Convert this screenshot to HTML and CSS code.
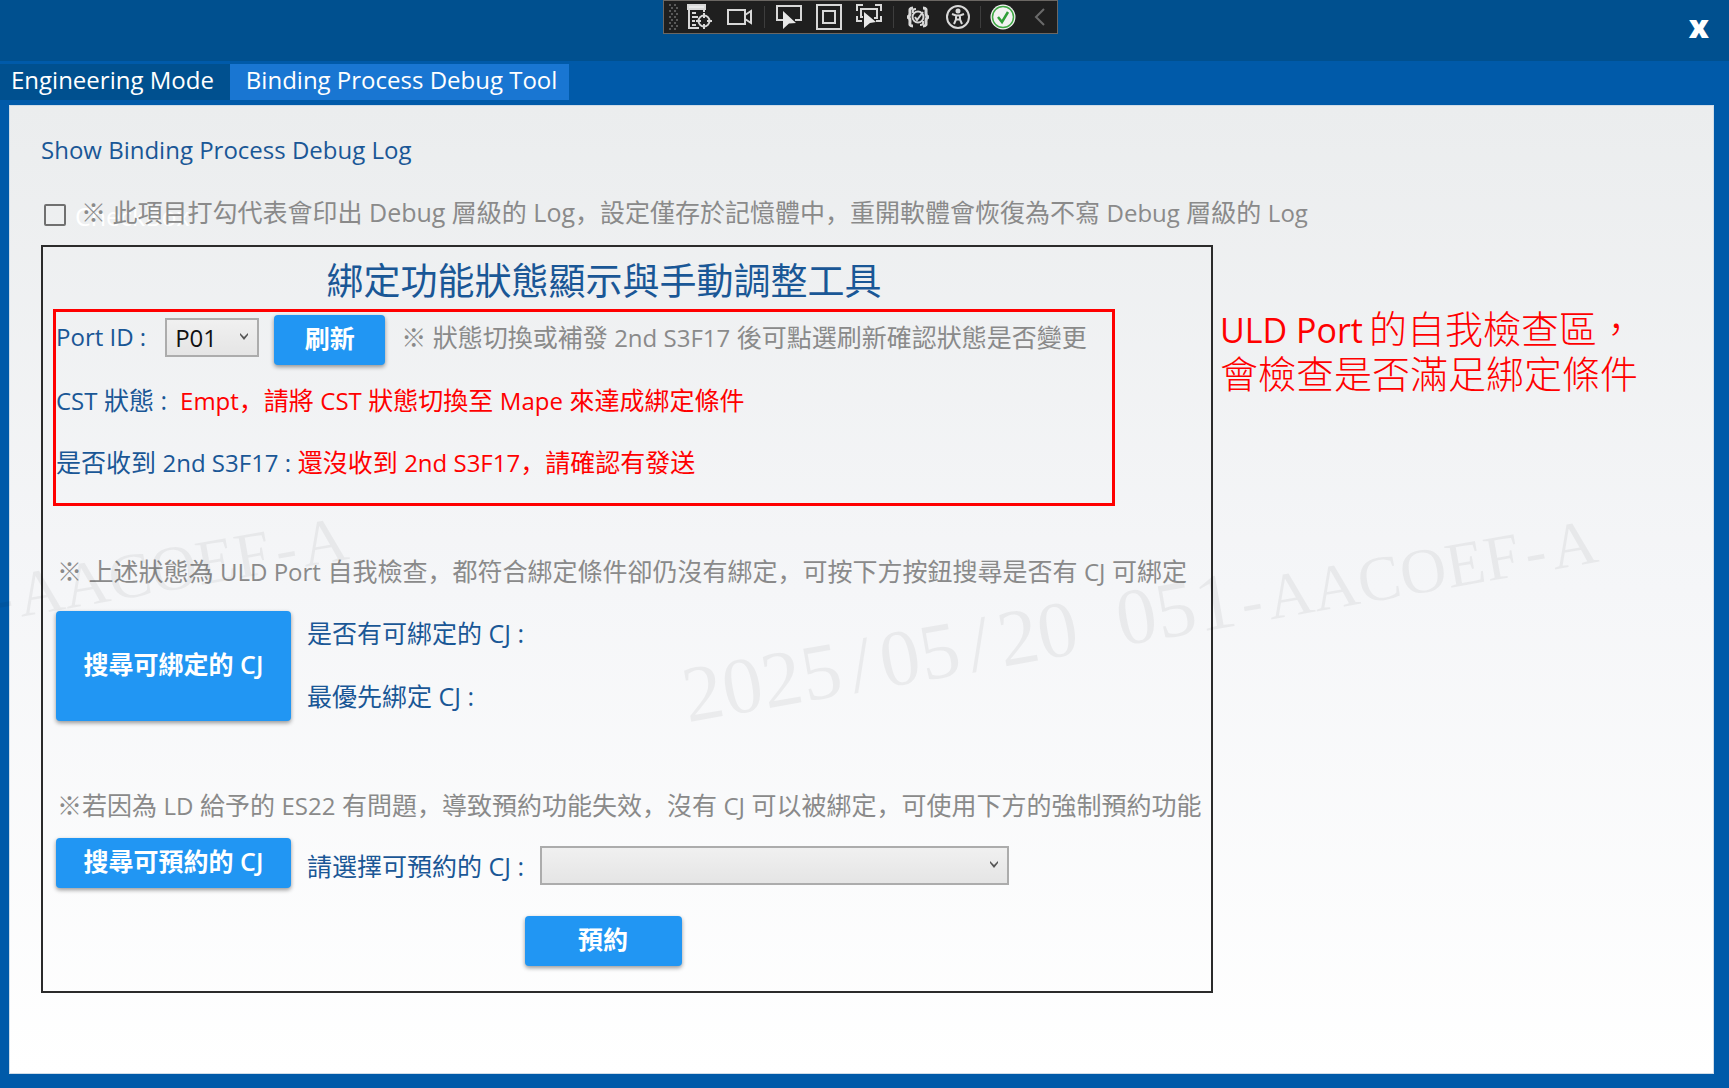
FILE: index.html
```html
<!DOCTYPE html>
<html lang="zh-Hant">
<head>
<meta charset="utf-8">
<title>Binding Process Debug Tool</title>
<link rel="stylesheet" href="styles.css">
</head>
<body>
<div class="window">
  <header class="titlebar">
    <div class="debugbar" role="toolbar" aria-label="Debug">
      <svg class="grip" viewBox="0 0 16 32" aria-hidden="true"><g fill="#5a5a5a"><path d="M5 3h2v2H5zM10 3h2v2h-2zM7 6h2v2H7zM12 6h2v2h-2zM5 9h2v2H5zM10 9h2v2h-2zM7 12h2v2H7zM12 12h2v2h-2zM5 15h2v2H5zM10 15h2v2h-2zM7 18h2v2H7zM12 18h2v2h-2zM5 21h2v2H5zM10 21h2v2h-2zM7 24h2v2H7zM12 24h2v2h-2zM5 27h2v2H5zM10 27h2v2h-2z"/></g></svg>
      <button class="tool" aria-label="Live visual tree"><svg viewBox="0 0 26 26"><path d="M1 1h17v4H1z" fill="#e8e8e8"/><path d="M2 5v19h10M17 5v3M5 9h4M5 13h6M5 17h3M5 21h4"/><circle cx="17" cy="17" r="5.5"/><path d="M17 9v5M17 20v5M9 17h5M20 17h5"/></svg></button>
      <button class="tool" aria-label="Record"><svg viewBox="0 0 26 26"><path d="M1 6h17v14H1zM18 11l6-4v12l-6-4"/></svg></button>
      <span class="sep"></span>
      <button class="tool" aria-label="Select element"><svg viewBox="0 0 26 26"><path d="M7 16H1V2h24v14h-6"/><path d="M7 7l13 12-7 .5L7 25z" fill="#e8e8e8" stroke="none"/></svg></button>
      <button class="tool" aria-label="Layout adorners"><svg viewBox="0 0 26 26"><path d="M1 1h24v24H1zM7 7h12v12H7z"/></svg></button>
      <button class="tool" aria-label="Track focus"><svg viewBox="0 0 26 26"><path d="M1 7V1h6M19 1h6v6M1 12v5h5M25 12v5h-5M7 13H5V5h16v9h-3"/><path d="M8 8l12 10-6 1-6 5z" fill="#e8e8e8" stroke="none"/></svg></button>
      <span class="sep"></span>
      <button class="tool" aria-label="Binding failures"><svg viewBox="0 0 26 26"><path d="M8 4C4 4 5 6 5 9s-1 4-3 4c2 0 3 1 3 4s-1 5 3 5M18 4c4 0 3 2 3 5s1 4 3 4c-2 0-3 1-3 4s1 5-3 5" stroke-width="3"/><path d="M11 5C7 5 8 7 8 9M15 21c4 0 3-2 3-4"/><circle cx="13" cy="13" r="5.5"/><path d="M10 13l2 3 6-8"/></svg></button>
      <button class="tool" aria-label="Accessibility"><svg viewBox="0 0 26 26"><circle cx="13" cy="13" r="11"/><circle cx="13" cy="7" r="1.5" fill="#d8d8d8"/><path d="M7 10l4 1.5h4L19 10M11 11.500v4L9 20M15 11.500v4l2 4.500M11 15.500h4"/></svg></button>
      <span class="sep tight"></span>
      <button class="tool" aria-label="Hot reload"><svg viewBox="0 0 26 26"><circle cx="13" cy="13" r="12.500" fill="#f2f2f2" stroke="none"/><circle cx="13" cy="13" r="10.500" stroke="#3fa845" stroke-width="1.500"/><path d="M8 13l4 5 6-10" stroke="#2f9e38" stroke-width="2.500"/></svg></button>
      <button class="tool collapse" aria-label="Collapse"><svg viewBox="0 0 26 26"><path d="M17 5l-8 8 8 8" stroke="#6a6a6a"/></svg></button>
    </div>
    <button class="close" aria-label="Close">x</button>
  </header>
  <nav class="tabs">
    <button class="tab">Engineering Mode</button>
    <button class="tab active">Binding Process Debug Tool</button>
  </nav>
  <main class="panel">
    <h1 class="heading">Show Binding Process Debug Log</h1>
    <div class="log-row" lang="zh-Hans">
      <input type="checkbox" id="log">
      <label for="log"><span class="ghost" aria-hidden="true">CheckBox</span>※ 此項目打勾代表會印出 Debug 層級的 Log，設定僅存於記憶體中，重開軟體會恢復為不寫 <span class="en">Debug</span> 層級的 <span class="en">Log</span></label>
    </div>
    <div class="columns">
      <section class="group" lang="zh-Hans">
        <h2 class="title">綁定功能狀態顯示與手動調整工具</h2>
        <div class="checks">
          <div class="port-row">
            <label class="en" for="port">Port ID :</label>
            <span class="combo port"><select id="port"><option>P01</option></select><svg viewBox="0 0 10 10" aria-hidden="true"><path d="M1 1v2l4 5 4-5V1L5 5z"/></svg></span>
            <button class="btn refresh">刷新</button>
            <span class="note">※ 狀態切換或補發 <span class="en">2nd S3F17</span> 後可點選刷新確認狀態是否變更</span>
          </div>
          <p class="status"><span class="en">CST</span> 狀態 :&nbsp; <span class="alert"><span class="en">Empt</span>，請將 <span class="en">CST</span> 狀態切換至 <span class="en">Mape</span> 來達成綁定條件</span></p>
          <p class="status">是否收到 <span class="en">2nd S3F17 :</span> <span class="alert">還沒收到 <span class="en">2nd S3F17</span>，請確認有發送</span></p>
        </div>
        <p class="note search-note">※ 上述狀態為 <span class="en">ULD Port</span> 自我檢查，都符合綁定條件卻仍沒有綁定，可按下方按鈕搜尋是否有 <span class="en">CJ</span> 可綁定</p>
        <div class="row">
          <button class="btn wide tall">搜尋可綁定的 CJ</button>
          <div class="results">
            <p>是否有可綁定的 CJ :</p>
            <p>最優先綁定 CJ :</p>
          </div>
        </div>
        <p class="note reserve-note">※若因為 <span class="en">LD</span> 給予的 <span class="en">ES22</span> 有問題，導致預約功能失效，沒有 <span class="en">CJ</span> 可以被綁定，可使用下方的強制預約功能</p>
        <div class="row reserve-row">
          <button class="btn wide">搜尋可預約的 CJ</button>
          <label for="cj">請選擇可預約的 CJ :</label>
          <span class="combo cj"><select id="cj"></select><svg viewBox="0 0 10 10" aria-hidden="true"><path d="M1 1v2l4 5 4-5V1L5 5z"/></svg></span>
        </div>
        <button class="btn reserve">預約</button>
      </section>
      <aside class="callout"><span class="latin">ULD Port</span>的自我檢查區，<br>會檢查是否滿足綁定條件</aside>
    </div>
  </main>
  <div class="watermark first" aria-hidden="true">2025<i>/</i>05<i>/</i>20<i>&nbsp;</i>051<span><b>-</b>AACOEF<b>-</b>A</span></div>
  <div class="watermark second" aria-hidden="true"><span><b>-</b>AACOEF<b>-</b>A</span></div>
</div>
</body>
</html>
```
FILE: styles.css
```css
* { box-sizing: border-box; }

body {
  margin: 0;
  font-family: "Open Sans", "Noto Sans CJK SC", sans-serif;
  font-size: 25px;
  line-height: 36px;
  color: #1a5796;
}

h1, h2, p { margin: 0; font-weight: 400; }
button, select { font: inherit; }
button { border: 0; padding: 0; cursor: pointer; }
.en { font-size: 24px; line-height: 1; }

.window {
  position: relative;
  display: flex;
  flex-direction: column;
  min-height: 100vh;
  overflow: hidden;
  background: #005aa9;
}

/* Title bar */
.titlebar {
  display: grid;
  grid-template-columns: 1fr auto 1fr;
  height: 61px;
  padding: 0 20px 0 12px;
  background: #00508f;
}
.debugbar {
  grid-column: 2;
  display: flex;
  align-items: center;
  height: 34px;
  border: 1px solid #6b6763;
  background: #1f1f1f;
}
.grip { width: 16px; height: 32px; }
.tool {
  display: grid;
  place-items: center;
  width: 40px;
  height: 32px;
  background: none;
}
.tool svg {
  width: 26px;
  height: 26px;
  fill: none;
  stroke: #d8d8d8;
  stroke-width: 2;
}
.collapse { width: 34px; }
.sep { width: 1px; height: 22px; margin: 0 4px; background: #3d3d3d; }
.tight { margin: 0 2px; }
.close {
  justify-self: end;
  align-self: center;
  padding-bottom: 10px;
  background: none;
  color: #fff;
  font-size: 32px;
  font-weight: 800;
}

/* Tabs */
.tabs { display: flex; padding: 3px 0 5px; }
.tab {
  height: 36px;
  padding: 0 16px 4px 11px;
  background: #00508f;
  color: #fff;
  font-size: 24px;
  line-height: 32px;
}
.tab.active { padding: 0 12px 4px 16px; background: #1976d2; }

/* Page */
.panel {
  flex: 1;
  margin: 0 15px 14px 9px;
  padding: 26px 31px 76px;
  border: 1px solid #cfdce8;
  background: linear-gradient(#ebedee, #f5f6f8 50%, #fff);
}
.heading { font-size: 24px; line-height: 36px; }
.log-row {
  display: flex;
  align-items: center;
  gap: 15px;
  margin: 26px 0 15px;
  color: #8a8a8a;
}
.log-row input {
  appearance: none;
  width: 22px;
  height: 22px;
  margin: 6px 0 0 3px;
  border: 2px solid #707070;
  border-radius: 2px;
}
.log-row label { position: relative; z-index: 0; }
.ghost {
  position: absolute;
  left: -6px;
  top: 4px;
  z-index: -1;
  color: #fff;
}

.columns { display: flex; align-items: flex-start; gap: 7px; }
.group {
  flex: 0 1 1172px;
  display: flex;
  flex-direction: column;
  padding: 9px 0 25px;
  border: 2px solid #2b2b2b;
}
.title {
  padding-right: 46px;
  font-size: 37px;
  line-height: 50px;
  text-align: center;
}

.checks {
  width: 1062px;
  margin: 3px 0 0 10px;
  padding: 3px 0 10px;
  border: 3px solid #f00;
}
.port-row { display: flex; align-items: center; margin-bottom: 4px; }
.port-row label, .port-row .note, .port-row .combo { margin-bottom: 6px; }
.status { line-height: 62px; }
.alert { color: #f00; }
.note { color: #8a8a8a; }

.combo { position: relative; display: inline-flex; }
.combo select {
  appearance: none;
  width: 100%;
  height: 39px;
  padding: 0 8px;
  border: 2px solid #acacac;
  border-radius: 0;
  background: linear-gradient(#f0f0f0, #e5e5e5);
  color: #111;
  font-size: 24px;
}
.combo svg {
  position: absolute;
  right: 10px;
  top: 14px;
  width: 10px;
  height: 10px;
  fill: #555;
  pointer-events: none;
}
.port { width: 94px; margin: 0 15px 0 19px; }
.cj { width: 469px; }

.btn {
  height: 50px;
  padding-bottom: 4px;
  border-radius: 4px;
  background: #2196f3;
  box-shadow: 0 2px 4px rgba(0, 0, 0, .4);
  color: #fff;
  font-weight: 600;
}
.refresh { width: 111px; margin-right: 16px; }
.wide { width: 235px; }
.tall { height: 110px; }

.search-note { margin: 47px 0 22px 14px; }
.row { display: flex; align-items: center; gap: 16px; padding-left: 13px; }
.results { display: grid; gap: 27px; padding-bottom: 4px; }
.reserve-note { margin: 66px 0 15px 14px; white-space: nowrap; }
.reserve-row label { padding-top: 6px; }
.reserve-row .combo { padding-top: 4px; }
.reserve-row .combo svg { top: 18px; }
.reserve { width: 157px; margin: 28px 48px 0 0; align-self: center; }

.callout {
  padding-top: 61px;
  font-family: "Open Sans", "Noto Sans CJK TC", sans-serif;
  font-size: 38px;
  font-weight: 300;
  line-height: 45px;
  white-space: nowrap;
  color: #f00;
}
.latin { margin-right: 6px; font-size: 34px; font-weight: 400; line-height: 1; }

/* Tilted stamp over the whole window */
.watermark {
  position: absolute;
  top: 650px;
  transform: rotate(-10deg);
  transform-origin: left bottom;
  font-family: "Liberation Serif", serif;
  font-size: 80px;
  line-height: 90px;
  white-space: nowrap;
  color: rgba(0, 0, 0, .05);
  pointer-events: none;
}
.watermark span { font-size: 64px; }
.watermark i, .watermark b {
  display: inline-block;
  width: 40px;
  font-style: normal;
  font-weight: 400;
  text-align: center;
}
.watermark b { width: 32px; }
.first { left: 692px; }
.second { top: 550px; left: -6px; }
```
